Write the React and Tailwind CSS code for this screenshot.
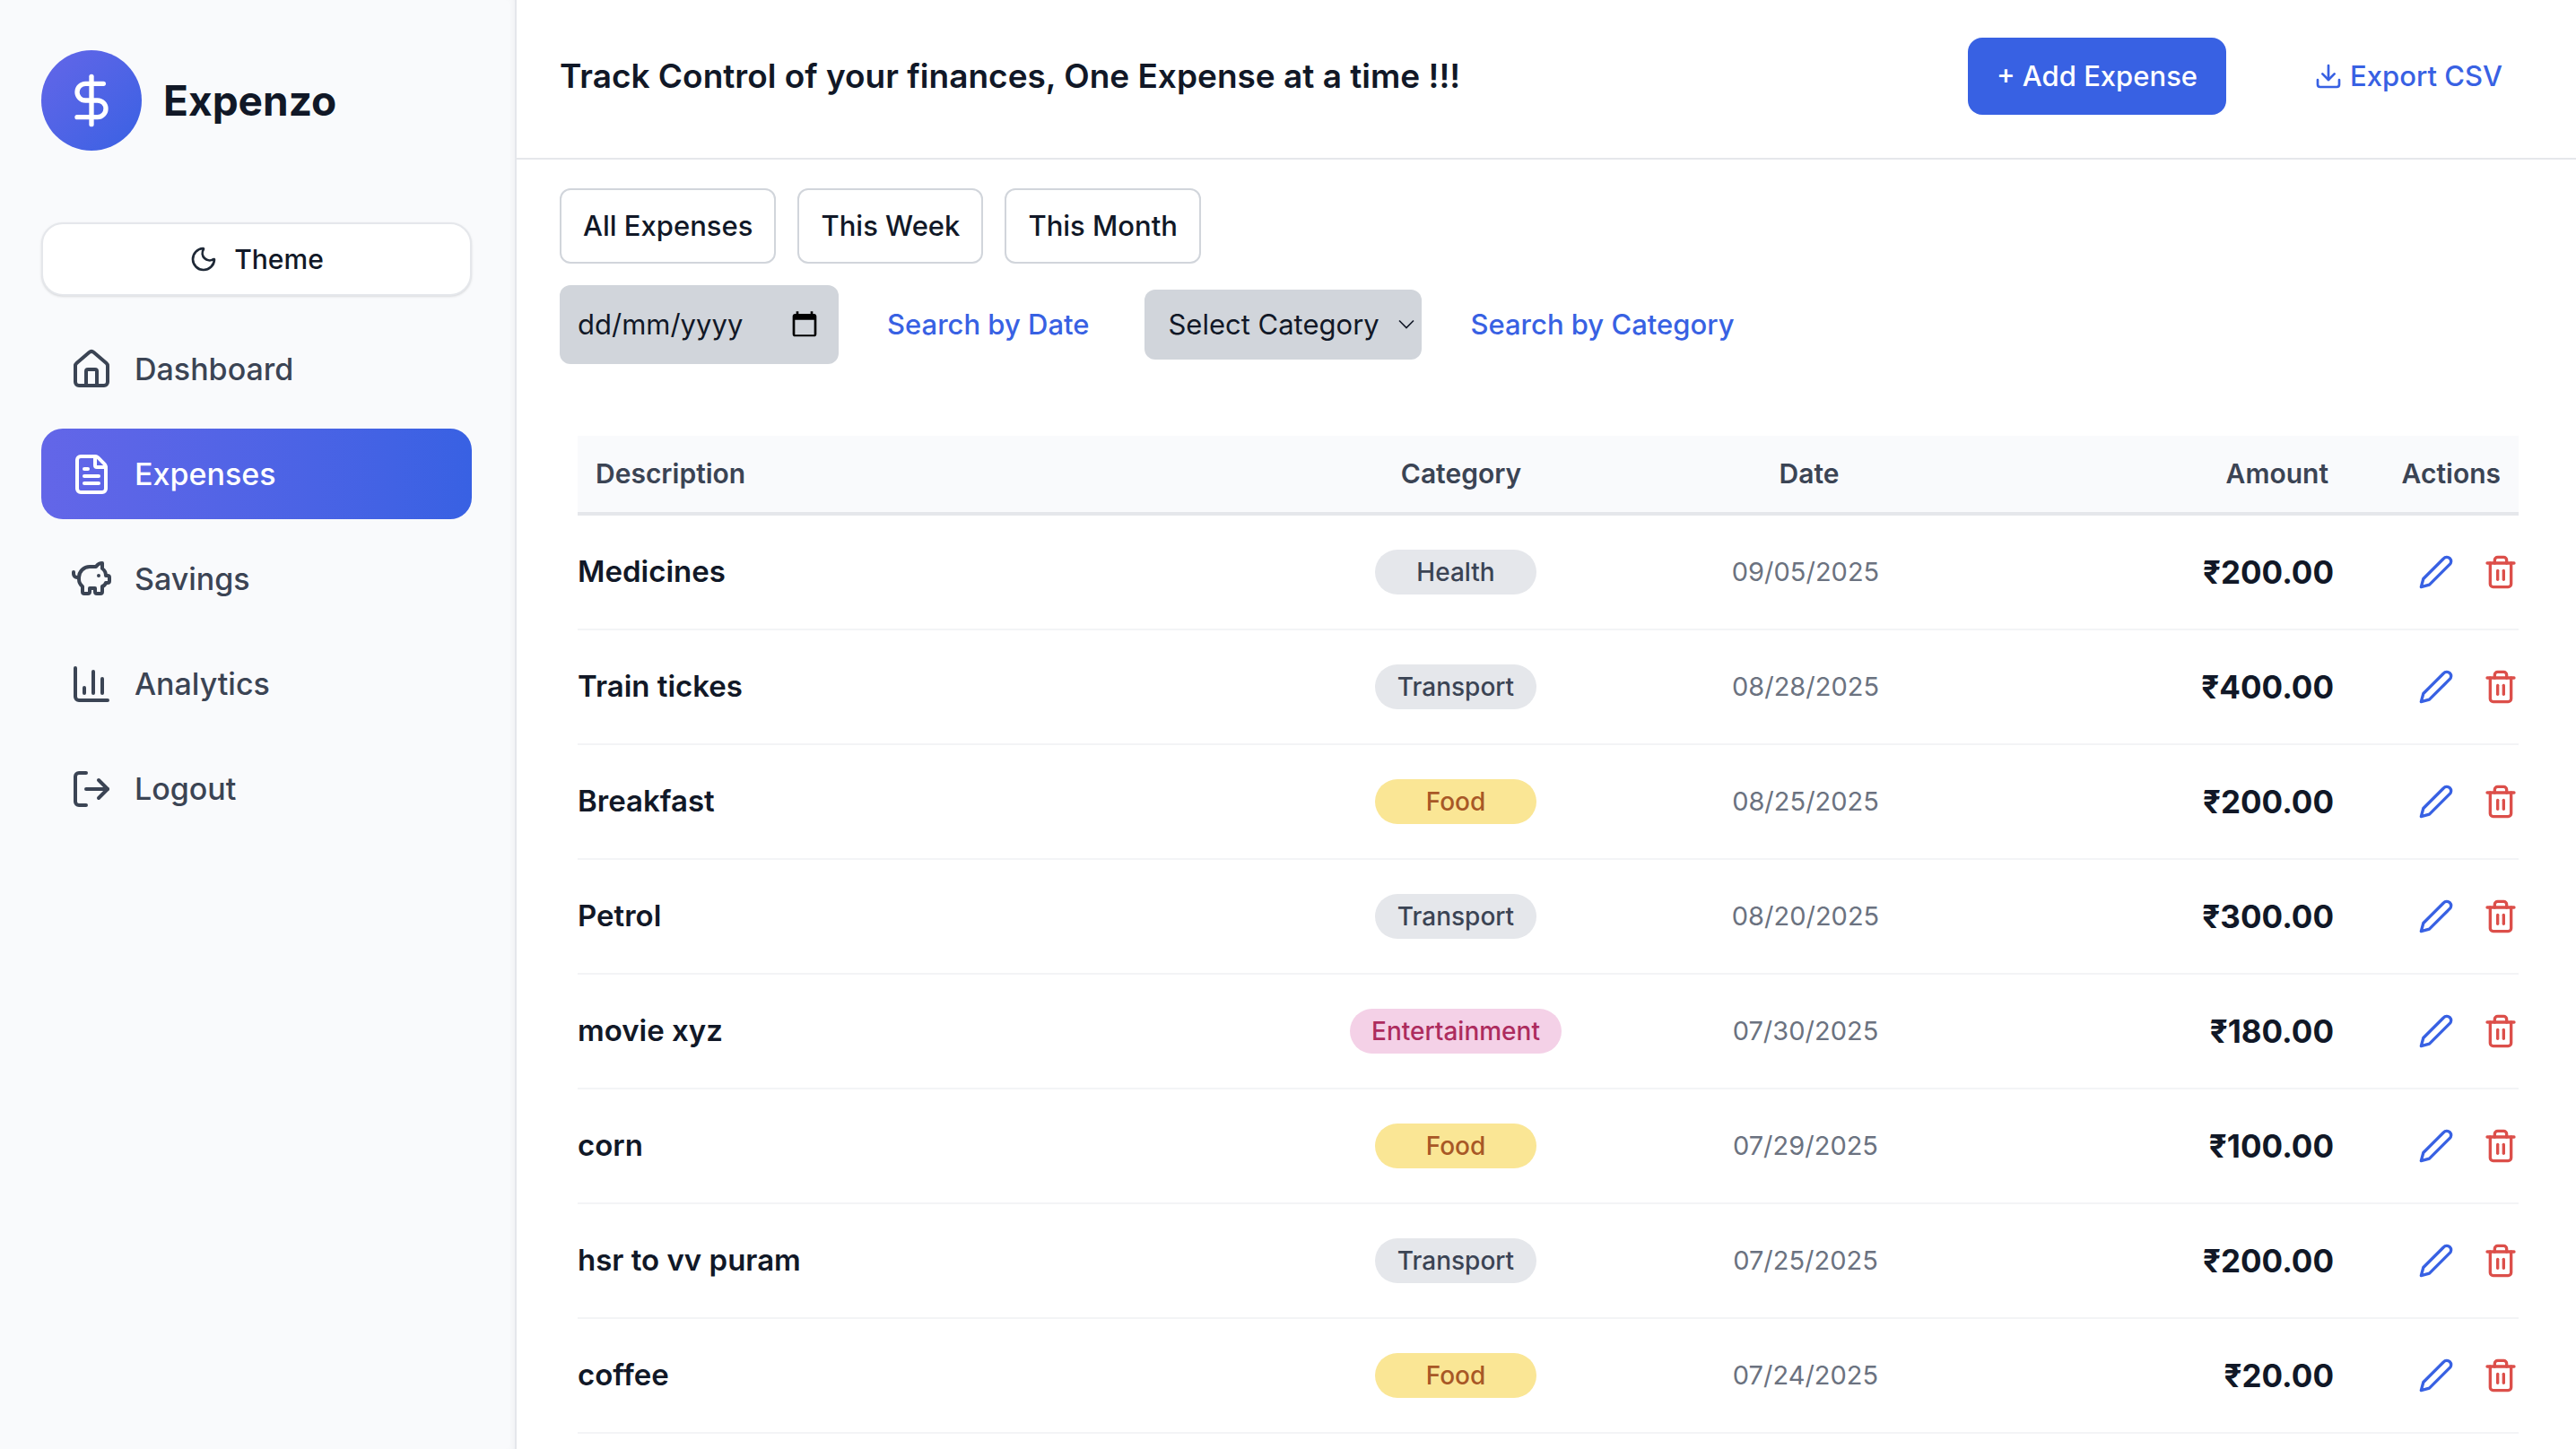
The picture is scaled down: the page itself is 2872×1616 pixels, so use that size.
import { useState } from "react";
import {
  DollarSign,
  Moon,
  House,
  FileText,
  PiggyBank,
  LogOut,
  Trash2,
  Download,
} from "lucide-react";

function AnalyticsIcon({ className }) {
  return (
    <svg viewBox="0 0 24 24" fill="none" stroke="currentColor" strokeWidth="2" strokeLinecap="round" strokeLinejoin="round" className={className} aria-hidden="true">
      <path d="M3 3v16a2 2 0 0 0 2 2h16" />
      <path d="M8 17v-3" />
      <path d="M13 17V5" />
      <path d="M18 17V9" />
    </svg>
  );
}

function PencilIcon({ className }) {
  return (
    <svg viewBox="0 0 24 24" fill="none" stroke="currentColor" strokeWidth="2" strokeLinecap="round" strokeLinejoin="round" className={className} aria-hidden="true">
      <path d="M17 3a2.85 2.83 0 1 1 4 4L7.5 20.5 2 22l1.5-5.5Z" />
    </svg>
  );
}

function PickerIcon({ className }) {
  return (
    <svg viewBox="0 0 24 24" fill="currentColor" className={className} aria-hidden="true">
      <path d="M20 3h-1V1h-2v2H7V1H5v2H4c-1.1 0-2 .9-2 2v15c0 1.100.9 2 2 2h16c1.100 0 2-.9 2-2V5c0-1.100-.9-2-2-2zm0 17.500H4V8h16v12.500z" />
    </svg>
  );
}

const NAV = [
  { label: "Dashboard", Icon: House },
  { label: "Expenses", Icon: FileText, active: true },
  { label: "Savings", Icon: PiggyBank },
  { label: "Analytics", Icon: AnalyticsIcon },
  { label: "Logout", Icon: LogOut },
];

const EXPENSES = [
  ["Medicines", "Health", "09/05/2025", "200.00"],
  ["Train tickes", "Transport", "08/28/2025", "400.00"],
  ["Breakfast", "Food", "08/25/2025", "200.00"],
  ["Petrol", "Transport", "08/20/2025", "300.00"],
  ["movie xyz", "Entertainment", "07/30/2025", "180.00"],
  ["corn", "Food", "07/29/2025", "100.00"],
  ["hsr to vv puram", "Transport", "07/25/2025", "200.00"],
  ["coffee", "Food", "07/24/2025", "20.00"],
];

const BADGES = {
  Food: "bg-[#fae695] text-[#a85826]",
  Entertainment: "bg-[#f4d1e7] text-[#ad2c5e]",
  Health: "bg-[#e5e7eb] text-[#3b4454]",
  Transport: "bg-[#e5e7eb] text-[#3b4454]",
};

function Sidebar() {
  return (
    <aside className="w-[576px] shrink-0 border-r-2 border-[#e5e7eb] bg-[#f9fafc] pl-[46px] pr-12 pt-14 shadow-[inset_-6px_0_8px_-6px_rgba(0,0,0,0.06)]">
      <div className="flex items-center gap-6">
        <div className="flex size-28 items-center justify-center rounded-full bg-linear-to-br from-[#6366e8] to-[#3861e3] text-white">
          <DollarSign className="size-16" />
        </div>
        <span className="text-[46px] font-bold leading-[56px]">Expenzo</span>
      </div>
      <button type="button" className="mt-20 flex h-[82px] w-full items-center justify-center gap-[18px] rounded-3xl border-2 border-[#e5e7eb] bg-white text-[30px] font-medium shadow-sm">
        <Moon className="size-8 text-[#1f2937]" />
        Theme
      </button>
      <nav className="mt-[31px] flex flex-col gap-4">
        {NAV.map(({ label, Icon, active }) => (
          <a
            key={label}
            href="#"
            aria-current={active ? "page" : undefined}
            className={
              active
                ? "flex h-[101px] items-center gap-6 rounded-3xl bg-linear-to-r from-[#6366e8] to-[#3861e3] px-8 text-[34px] font-medium text-white"
                : "flex h-[101px] items-center gap-6 rounded-3xl px-8 text-[34px] font-medium text-[#3b4454]"
            }
          >
            <Icon className="size-12" />
            {label}
          </a>
        ))}
      </nav>
    </aside>
  );
}

function Header() {
  return (
    <header className="flex h-[178px] items-center border-b-2 border-[#e5e7eb] pb-[6px] pl-12 pr-[82px]">
      <h1 className="flex-1 text-[37px] font-semibold">
        Track Control of your finances, One Expense at a time !!!
      </h1>
      <button type="button" className="h-[86px] rounded-2xl bg-[#3861e3] px-8 text-[31px] font-medium text-white">
        + Add Expense
      </button>
      <button type="button" className="ml-[98px] flex items-center gap-2 text-[31px] font-medium text-[#3861e3]">
        <Download className="size-8" />
        Export CSV
      </button>
    </header>
  );
}

function Filters() {
  const [date, setDate] = useState("");
  return (
    <section className="pl-12 pt-8">
      <div className="flex gap-6">
        {["All Expenses", "This Week", "This Month"].map((t) => (
          <button key={t} type="button" className="h-[84px] rounded-xl border-2 border-[#d1d5db] px-6 text-[31px] font-medium">
            {t}
          </button>
        ))}
      </div>
      <div className="mt-6 flex h-[88px] items-center">
        <div className="flex h-[88px] w-[311px] items-center rounded-xl bg-[#d1d5db] pl-5 pr-[22px]">
          <input
            aria-label="Date"
            placeholder="dd/mm/yyyy"
            value={date}
            onChange={(e) => setDate(e.target.value)}
            className="min-w-0 flex-1 bg-transparent text-[31px] outline-none placeholder:text-[#111827]"
          />
          <button type="button" aria-label="Open calendar">
            <PickerIcon className="size-8 text-black" />
          </button>
        </div>
        <button type="button" className="ml-[54px] text-[31px] font-medium text-[#3861e3]">
          Search by Date
        </button>
        <div className="ml-[62px] grid h-[78px] w-[309px] items-center rounded-xl bg-[#d1d5db]">
          <select aria-label="Category" className="col-start-1 row-start-1 h-full w-full appearance-none pl-[26px] text-[31px] outline-none">
            <option>Select Category</option>
            <option>Food</option>
            <option>Transport</option>
            <option>Health</option>
            <option>Entertainment</option>
          </select>
          <svg viewBox="0 0 18 12" className="pointer-events-none col-start-1 row-start-1 mr-2 h-3 w-[18px] justify-self-end" fill="none" stroke="#111827" strokeWidth="1.6" aria-hidden="true">
            <path d="M1 1.500 9 9.500l8-8" />
          </svg>
        </div>
        <button type="button" className="ml-[54px] text-[31px] font-medium text-[#3861e3]">
          Search by Category
        </button>
      </div>
    </section>
  );
}

function ExpenseTable() {
  return (
    <section className="pl-[68px] pr-16 pt-20">
      <table className="w-full table-fixed border-separate border-spacing-0">
        <colgroup>
          <col />
          <col className="w-[360px]" />
          <col className="w-[420px]" />
          <col className="w-[379px]" />
          <col className="w-[206px]" />
        </colgroup>
        <thead className="bg-[#f9fafc] text-[30px] text-[#3b4454]">
          <tr className="h-[89px] *:border-b-4 *:border-[#e5e7eb] *:font-semibold">
            <th className="pl-5 text-left">Description</th>
            <th className="pl-3">Category</th>
            <th className="pl-2">Date</th>
            <th className="pr-1.5 text-right">Amount</th>
            <th className="pr-5 text-right">Actions</th>
          </tr>
        </thead>
        <tbody>
          {EXPENSES.map(([name, category, date, amount]) => (
            <tr key={name} className="h-32 *:border-b-2 *:border-[#f3f4f6]">
              <td className="text-[33px] font-semibold">{name}</td>
              <td className="text-center">
                <div className="flex justify-center">
                  <span className={`flex h-[50px] min-w-[180px] items-center justify-center rounded-full px-6 text-[28px] font-medium ${BADGES[category]}`}>
                    {category}
                  </span>
                </div>
              </td>
              <td className="text-center text-[29px] text-[#6b7280]">{date}</td>
              <td className="text-right text-[35px] font-bold">₹{amount}</td>
              <td>
                <div className="flex justify-end gap-8">
                  <button type="button" aria-label={`Edit ${name}`} className="text-[#3861e3]">
                    <PencilIcon className="size-10" />
                  </button>
                  <button type="button" aria-label={`Delete ${name}`} className="text-[#dc4f4a]">
                    <Trash2 className="size-10" />
                  </button>
                </div>
              </td>
            </tr>
          ))}
        </tbody>
      </table>
    </section>
  );
}

export default function App() {
  return (
    <div className="flex min-h-screen bg-white font-['Inter',sans-serif] text-[#111827]">
      <Sidebar />
      <main className="min-w-0 flex-1">
        <Header />
        <Filters />
        <ExpenseTable />
      </main>
    </div>
  );
}
